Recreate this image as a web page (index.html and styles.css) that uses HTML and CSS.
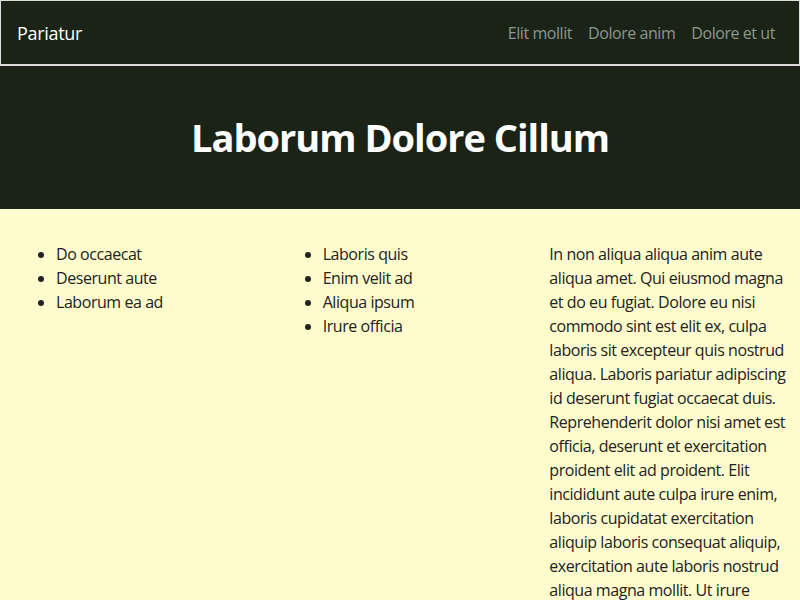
FILE: index.html
```html
<!DOCTYPE html>
<html lang="en">
<head>
<meta charset="utf-8">
<title>Pariatur</title>
<link rel="stylesheet" href="styles.css">
</head>
<body>
<header class="topbar">
  <div class="brand">Pariatur</div>
  <nav class="nav">
    <a class="nav-link" href="#">Elit mollit</a>
    <a class="nav-link" href="#">Dolore anim</a>
    <a class="nav-link" href="#">Dolore et ut</a>
  </nav>
</header>
<section class="hero">
  <h1 class="hero-title">Laborum Dolore Cillum</h1>
</section>
<main class="content">
  <div class="col">
    <ul class="list">
      <li>Do occaecat</li>
      <li>Deserunt aute</li>
      <li>Laborum ea ad</li>
    </ul>
  </div>
  <div class="col">
    <ul class="list">
      <li>Laboris quis</li>
      <li>Enim velit ad</li>
      <li>Aliqua ipsum</li>
      <li>Irure officia</li>
    </ul>
  </div>
  <div class="col col-text">
    <p class="text">In non aliqua aliqua anim aute aliqua amet. Qui eiusmod magna et do eu fugiat. Dolore eu nisi commodo sint est elit ex, culpa laboris sit excepteur quis nostrud aliqua. Laboris pariatur adipiscing id deserunt fugiat occaecat duis. Reprehenderit dolor nisi amet est officia, deserunt et exercitation proident elit ad proident. Elit incididunt aute culpa irure enim, laboris cupidatat exercitation aliquip laboris consequat aliquip, exercitation aute laboris nostrud aliqua magna mollit. Ut irure consectetur officia velit esse cillum.</p>
  </div>
</main>
</body>
</html>
```
FILE: styles.css
```css
* { box-sizing: border-box; }
html, body {
  margin: 0;
  padding: 0;
}
body {
  font-family: "Open Sans", "Noto Sans", sans-serif;
  font-size: 16px;
  line-height: 24px;
  letter-spacing: -0.44px;
  background: #fefccd;
  color: #222;
}
.topbar {
  display: flex;
  align-items: center;
  justify-content: space-between;
  height: 66px;
  padding: 0 16px;
  background: #1a2316;
  border: 1px solid #dcdcdc;
  border-bottom-width: 2px;
}
.brand {
  color: #fff;
  font-size: 18px;
  letter-spacing: -0.3px;
}
.nav {
  display: flex;
}
.nav-link {
  color: #8e978a;
  text-decoration: none;
  padding: 0 8px;
}
.hero {
  background: #1a2316;
  height: 143px;
  display: flex;
  align-items: center;
  justify-content: center;
}
.hero-title {
  margin: 0;
  color: #fff;
  font-size: 38px;
  font-weight: 700;
  line-height: 1.2;
  letter-spacing: -1px;
}
.content {
  display: grid;
  grid-template-columns: 1fr 1fr 1fr;
  padding-top: 33px;
}
.col {
  padding: 0 16px;
}
.col-text {
  padding-right: 8px;
}
.list {
  margin: 0;
  padding-left: 40px;
}
.text {
  margin: 0;
}
```
